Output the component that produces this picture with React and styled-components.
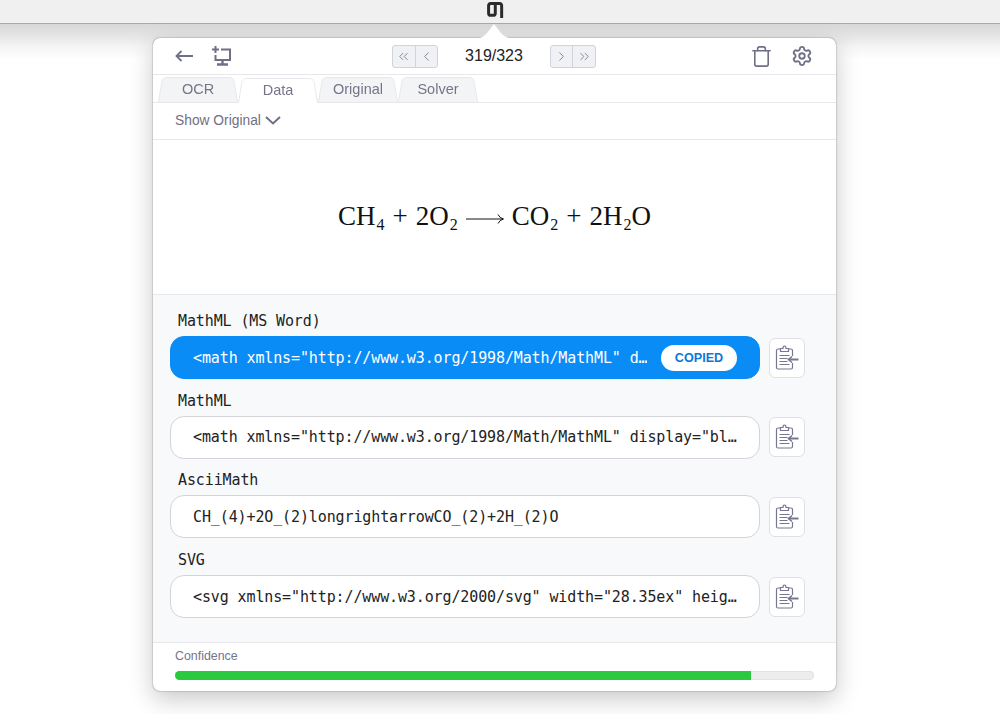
import styled, { createGlobalStyle } from 'styled-components'
import { ChevronLeft, ChevronRight, ChevronsLeft, ChevronsRight, Settings, Trash } from 'lucide-react'

const Global = createGlobalStyle`
  html, body {
    margin: 0;
    padding: 0;
    background: #fff;
  }
  body {
    font-family: 'Liberation Sans', Arial, sans-serif;
  }
`

const Page = styled.div`
  position: relative;
  width: 1000px;
  height: 714px;
  overflow: hidden;
  background: linear-gradient(#d8d8d8 24px, #e5e5e5 36px, #f4f4f4 46px, #fff 60px);
`

const MenuBar = styled.div`
  height: 23px;
  background: #f0f0f0;
  border-bottom: 1px solid #a9a9a9;
  display: flex;
  justify-content: center;
`

const Logo = styled.svg`
  width: 17px;
  height: 17px;
  margin-top: 2px;
  margin-left: -10px;
  color: #2b2b2b;
`

const Notch = styled.svg`
  position: absolute;
  left: 476px;
  top: 24px;
  width: 38px;
  height: 15px;
`

const Panel = styled.main`
  width: 683px;
  height: 653px;
  margin: 14px 0 0 153px;
  background: #fff;
  border-radius: 7px;
  box-shadow: 0 0 1.5px rgba(0, 0, 0, 0.55), 0 8px 24px rgba(0, 0, 0, 0.22);
  display: flex;
  flex-direction: column;
  overflow: hidden;
`

const Header = styled.header`
  height: 36px;
  flex: none;
  border-bottom: 1px solid #e8e8ec;
  display: grid;
  grid-template-columns: 1fr auto 1fr;
  align-items: center;
  padding: 0 23px 0 22px;
`

const IconGroup = styled.div`
  display: flex;
  align-items: center;
  gap: 18px;
  justify-content: ${(p) => (p.$end ? 'flex-end' : 'flex-start')};
  color: #6f6f87;
`

const Pager = styled.div`
  display: flex;
  align-items: center;
  gap: 27px;
`

const PageCount = styled.span`
  font-size: 16px;
  color: #222;
`

const PagerButtons = styled.div`
  display: flex;
  box-sizing: border-box;
  width: 46px;
  height: 23px;
  border: 1px solid #d0d3da;
  border-radius: 3px;
  background: #eff1f4;
  overflow: hidden;
`

const PagerButton = styled.button`
  flex: 1;
  padding: 0;
  border: 0;
  background: none;
  color: #77778f;
  display: flex;
  align-items: center;
  justify-content: center;
  & + & {
    border-left: 1px solid #d0d3da;
  }
`

const Tabs = styled.nav`
  height: 27px;
  flex: none;
  display: flex;
  align-items: flex-end;
  padding-left: 5px;
  border-bottom: 1px solid #e8e8ec;
`

const Tab = styled.div`
  position: relative;
  width: 80px;
  height: 26px;
  margin-bottom: ${(p) => (p.$active ? '-1px' : '0')};
  display: flex;
  align-items: center;
  justify-content: center;
  font-size: 14.5px;
  color: #75758a;
  z-index: ${(p) => (p.$active ? 1 : 0)};
  span {
    position: relative;
  }
  &::before {
    content: '';
    position: absolute;
    inset: -2px 0 0;
    background: ${(p) => (p.$active ? '#fff' : '#f3f4f6')};
    border: 1px solid #e8e8ec;
    border-bottom: ${(p) => (p.$active ? '1px solid #fff' : '0')};
    border-radius: 5px 5px 0 0;
    transform: perspective(34px) rotateX(8deg);
    transform-origin: bottom;
  }
`

const ToggleRow = styled.div`
  height: 37px;
  flex: none;
  box-sizing: border-box;
  padding: 0 0 2px 22px;
  display: flex;
  align-items: center;
  gap: 4px;
  font-size: 13.8px;
  color: #6f6f84;
  border-bottom: 1px solid #e8e8ec;
`

const Equation = styled.section`
  height: 155px;
  flex: none;
  box-sizing: border-box;
  padding-bottom: 2px;
  display: flex;
  align-items: center;
  justify-content: center;
  border-bottom: 1px solid #e8e8ec;
`

const Formula = styled.div`
  font-family: 'Liberation Serif', 'Times New Roman', serif;
  font-size: 27px;
  color: #111;
  white-space: nowrap;
  sub {
    font-size: 16px;
    line-height: 0;
    vertical-align: -5px;
    margin-left: 1px;
  }
`

const Operator = styled.span`
  margin: 0 8px;
`

const LongArrow = styled.svg`
  width: 38px;
  height: 12px;
  margin: 0 8px;
`

const Fields = styled.section`
  flex: 1;
  background: #f7f9fb;
  border-bottom: 1px solid #e8e8ec;
  padding: 17px 31px 0 17px;
  display: flex;
  flex-direction: column;
  gap: 12.7px;
`

const Field = styled.div`
  display: flex;
  flex-direction: column;
  gap: 6px;
  font-family: 'DejaVu Sans Mono', monospace;
  font-size: 15px;
  letter-spacing: -0.12px;
`

const FieldLabel = styled.label`
  height: 18px;
  line-height: 18px;
  padding-left: 8px;
  color: #222;
`

const FieldRow = styled.div`
  display: flex;
  align-items: center;
  gap: 9px;
`

const CodeBox = styled.div`
  width: 590px;
  height: 43px;
  box-sizing: border-box;
  padding: 0 22px 0 22px;
  border-radius: 14px;
  border: 1px solid ${(p) => (p.$copied ? '#0a8cf7' : '#d3d3d8')};
  background: ${(p) => (p.$copied ? '#0a8cf7' : '#fff')};
  color: ${(p) => (p.$copied ? '#fff' : '#222')};
  display: flex;
  align-items: center;
  gap: 14px;
`

const CodeText = styled.span`
  flex: 1;
  line-height: 24px;
  white-space: pre;
  overflow: hidden;
`

const CopiedBadge = styled.span`
  flex: none;
  width: 76px;
  height: 26px;
  border-radius: 13px;
  background: #fff;
  color: #0a78d8;
  font-family: 'Liberation Sans', Arial, sans-serif;
  font-size: 12.6px;
  font-weight: 700;
  letter-spacing: 0;
  display: flex;
  align-items: center;
  justify-content: center;
`

const CopyButton = styled.button`
  width: 36px;
  height: 40px;
  padding: 0;
  flex: none;
  border: 1px solid #e0e0e4;
  border-radius: 6px;
  background: #fff;
  display: flex;
  align-items: center;
  justify-content: center;
`

const Footer = styled.footer`
  flex: none;
  height: 48px;
  box-sizing: border-box;
  padding: 6px 22px 0;
  font-size: 12.4px;
  color: #75758a;
`

const Progress = styled.div`
  height: 9px;
  margin-top: 8px;
  border-radius: 5px;
  background: #ededee;
  box-shadow: inset 0 0 0 1px #e2e2e4;
  overflow: hidden;
`

const ProgressFill = styled.div`
  height: 100%;
  background: #29c940;
`

const BackIcon = () => (
  <svg width="19" height="14" viewBox="0 0 19 14" fill="none" stroke="#6f6f87" strokeWidth="1.8">
    <path d="M18 7H1.500M6.500 2 1.500 7l5 5" />
  </svg>
)

const ScreenIcon = () => (
  <svg width="19" height="20" viewBox="0 0 19 20" fill="none" stroke="#6f6f87" strokeWidth="2">
    <path d="M3.500 0v7M0 3.500h7" />
    <path d="M9 3.500h9v10.500H3.500V9" />
    <path d="M10.500 14v4M5 18.500h11" strokeWidth="2.400" />
  </svg>
)

const LogoMark = () => (
  <Logo viewBox="0 0 16 16" fill="none" stroke="currentColor" strokeWidth="2.800">
    <path d="M13.800 15V3.500Q13.800 1.500 11.800 1.500H3.500Q1.500 1.500 1.500 3.500V10.500Q1.500 12.500 3.500 12.500H5.800Q7.800 12.500 7.800 10.500V1.500" />
  </Logo>
)

const ExpandIcon = () => (
  <svg width="16" height="9" viewBox="0 0 16 9" fill="none" stroke="#6f6f84" strokeWidth="2">
    <path d="M1 1l7 6.500L15 1" />
  </svg>
)

const ClipboardIcon = () => (
  <svg width="24" height="26" viewBox="0 0 24 26" fill="none" stroke="#77778f" strokeWidth="1.200">
    <path d="M5.500 4H3Q1.500 4 1.500 5.500v17Q1.500 24 3 24h13Q17.500 24 17.500 22.500V18M17.500 11V5.500Q17.500 4 16 4h-2.500" />
    <path d="M5.500 6.500V3.500h2.500Q8 1 9.500 1T11 3.500h2.500v3z" />
    <path d="M4.500 10.500h10M4.500 13.500h8M4.500 16.500h8M4.500 19.500h10" />
    <path d="M23.500 14.500h-10" strokeWidth="2" />
    <path d="M17 11.500l-3.500 3 3.500 3" strokeWidth="1.600" />
  </svg>
)

const fields = [
  { label: 'MathML (MS Word)', code: '<math xmlns="http://www.w3.org/1998/Math/MathML" d…', copied: true },
  { label: 'MathML', code: '<math xmlns="http://www.w3.org/1998/Math/MathML" display="bl…' },
  { label: 'AsciiMath', code: 'CH_(4)+2O_(2)longrightarrowCO_(2)+2H_(2)O' },
  { label: 'SVG', code: '<svg xmlns="http://www.w3.org/2000/svg" width="28.35ex" heig…' },
]

const tabs = ['OCR', 'Data', 'Original', 'Solver']

export default function App() {
  return (
    <Page>
      <Global />
      <MenuBar>
        <LogoMark />
      </MenuBar>
      <Notch viewBox="0 0 38 15">
        <path d="M0 15Q7 14 11 9L18 0L25 9Q29 14 38 15z" fill="#fff" />
      </Notch>
      <Panel>
        <Header>
          <IconGroup>
            <BackIcon />
            <ScreenIcon />
          </IconGroup>
          <Pager>
            <PagerButtons>
              <PagerButton><ChevronsLeft size={15} strokeWidth={1.4} /></PagerButton>
              <PagerButton><ChevronLeft size={15} strokeWidth={1.4} /></PagerButton>
            </PagerButtons>
            <PageCount>319/323</PageCount>
            <PagerButtons>
              <PagerButton><ChevronRight size={15} strokeWidth={1.4} /></PagerButton>
              <PagerButton><ChevronsRight size={15} strokeWidth={1.4} /></PagerButton>
            </PagerButtons>
          </Pager>
          <IconGroup $end>
            <Trash size={23} strokeWidth={1.7} />
            <Settings size={22} strokeWidth={2} />
          </IconGroup>
        </Header>
        <Tabs>
          {tabs.map((t) => (
            <Tab key={t} $active={t === 'Data'}>
              <span>{t}</span>
            </Tab>
          ))}
        </Tabs>
        <ToggleRow>
          Show Original
          <ExpandIcon />
        </ToggleRow>
        <Equation>
          <Formula>
            CH<sub>4</sub>
            <Operator>+</Operator>
            2O<sub>2</sub>
            <LongArrow viewBox="0 0 38 12" fill="none" stroke="#111" strokeWidth="1">
              <path d="M0 6h37M32 1.500Q33.500 5 37.500 6Q33.500 7 32 10.500" />
            </LongArrow>
            CO<sub>2</sub>
            <Operator>+</Operator>
            2H<sub>2</sub>O
          </Formula>
        </Equation>
        <Fields>
          {fields.map((f) => (
            <Field key={f.label}>
              <FieldLabel>{f.label}</FieldLabel>
              <FieldRow>
                <CodeBox $copied={f.copied}>
                  <CodeText>{f.code}</CodeText>
                  {f.copied && <CopiedBadge>COPIED</CopiedBadge>}
                </CodeBox>
                <CopyButton>
                  <ClipboardIcon />
                </CopyButton>
              </FieldRow>
            </Field>
          ))}
        </Fields>
        <Footer>
          Confidence
          <Progress>
            <ProgressFill style={{ width: '90.2%' }} />
          </Progress>
        </Footer>
      </Panel>
    </Page>
  )
}
